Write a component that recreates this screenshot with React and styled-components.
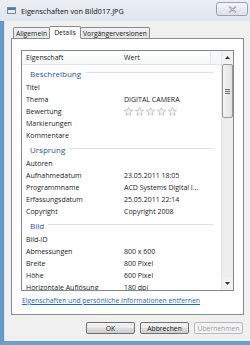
import React from "react";
import styled, { createGlobalStyle } from "styled-components";

const GlobalStyle = createGlobalStyle`
  html, body {
    margin: 0;
    padding: 0;
  }
  body {
    width: 250px;
    height: 345px;
    overflow: hidden;
    font-family: "Open Sans", "Noto Sans", sans-serif;
    color: #1a1a1a;
  }
`;

export const Window = styled.div`
  width: 250px;
  height: 345px;
  display: flex;
  flex-direction: column;
  overflow: hidden;
  background: #e3e9f0;
`;

export const TitleBar = styled.div`
  height: 21px;
  flex: none;
  display: flex;
  align-items: center;
  padding-left: 7px;
  background: linear-gradient(#e9eef4, #dfe6ee);
`;

export const TitleText = styled.span`
  font-size: 7.3px;
  margin-left: 5px;
  color: #111;
  flex: 1;
  white-space: nowrap;
`;

export const CloseButton = styled.div`
  width: 30px;
  height: 12px;
  margin-right: 2px;
  margin-top: -3px;
  border: 1px solid #9aa3ae;
  border-radius: 3px;
  background: linear-gradient(#f3f5f8, #dde3ea);
  display: flex;
  align-items: center;
  justify-content: center;
`;

export const Frame = styled.div`
  flex: 1;
  display: flex;
  border-left: 4px solid #6599cb;
  border-bottom: 4px solid #719fcc;
`;

export const Body = styled.div`
  flex: 1;
  display: flex;
  flex-direction: column;
  background: #f0f0f0;
  border-left: 1px solid #dfe3e8;
  padding: 4px 6px 0 6px;
`;

export const TabRow = styled.div`
  height: 13px;
  display: flex;
  align-items: flex-end;
  padding-left: 2px;
  position: relative;
  z-index: 1;
`;

export const Tab = styled.div`
  height: ${(p) => (p.$active ? "13px" : "11px")};
  width: ${(p) => p.$w}px;
  box-sizing: border-box;
  margin-right: -1px;
  border: 1px solid #898c95;
  border-bottom: ${(p) => (p.$active ? "1px solid #fff" : "none")};
  margin-bottom: ${(p) => (p.$active ? "-1px" : "0")};
  background: ${(p) => (p.$active ? "#fff" : "linear-gradient(#f2f2f2, #e3e3e3)")};
  font-size: 6.8px;
  white-space: nowrap;
  display: flex;
  align-items: center;
  justify-content: center;
  border-radius: 2px 2px 0 0;
`;

export const Panel = styled.div`
  height: 277px;
  box-sizing: border-box;
  border: 1px solid #898c95;
  background: #fff;
  padding: 11px 9px 0 9px;
  display: flex;
  flex-direction: column;
`;

export const ListBox = styled.div`
  height: 241px;
  flex: none;
  box-sizing: border-box;
  border: 1px solid #828790;
  display: flex;
  overflow: hidden;
`;

export const ListContent = styled.div`
  flex: 1;
  overflow: hidden;
  display: flex;
  flex-direction: column;
`;

export const HeaderRow = styled.div`
  height: 13px;
  flex: none;
  display: flex;
  align-items: center;
  border-bottom: 1px solid #e2e4e8;
  background: linear-gradient(#ffffff, #f7f8f9);
  font-size: 7px;
`;

export const HeaderCell = styled.div`
  width: ${(p) => p.$w}px;
  height: 100%;
  box-sizing: border-box;
  display: flex;
  align-items: center;
  padding-left: ${(p) => p.$pad}px;
  border-right: ${(p) => (p.$sep ? "1px solid #e3e5e8" : "none")};
  background: ${(p) => (p.$fill ? "#f6f7f8" : "transparent")};
`;

export const Section = styled.div`
  height: 16px;
  flex: none;
  display: flex;
  align-items: center;
  padding-left: 8px;
  padding-right: 8px;
  color: #2f4f9e;
  font-size: 8px;
  &::after {
    content: "";
    flex: 1;
    height: 1px;
    margin-left: 4px;
    margin-top: -1px;
    background: #dce3ec;
  }
`;

export const Row = styled.div`
  height: 12px;
  flex: none;
  display: flex;
  align-items: center;
  font-size: 7px;
  white-space: nowrap;
`;

export const NameCell = styled.div`
  width: 102px;
  padding-left: 4px;
  box-sizing: border-box;
`;

export const ValueCell = styled.div`
  display: flex;
  gap: 2px;
`;

export const ScrollBar = styled.div`
  width: 11px;
  flex: none;
  display: flex;
  flex-direction: column;
  background: #eeeeee;
  border-left: 1px solid #e6e6e6;
`;

export const ArrowButton = styled.div`
  height: 13px;
  flex: none;
  display: flex;
  align-items: center;
  justify-content: center;
  background: #f2f2f2;
`;

export const Thumb = styled.div`
  height: 54px;
  flex: none;
  box-sizing: border-box;
  border: 1px solid #9a9a9a;
  border-radius: 2px;
  background: linear-gradient(90deg, #f4f4f4, #e2e2e2);
  display: flex;
  flex-direction: column;
  align-items: center;
  justify-content: center;
  gap: 1px;
`;

export const Grip = styled.div`
  width: 5px;
  height: 1px;
  background: #707070;
`;

export const Track = styled.div`
  flex: 1;
`;

export const Link = styled.a`
  margin-top: 5px;
  font-size: 6.8px;
  color: #1a66c4;
  text-decoration: underline;
  white-space: nowrap;
  padding-left: 1px;
`;

export const ButtonRow = styled.div`
  display: flex;
  justify-content: flex-end;
  gap: 5px;
  margin-top: 7px;
  padding-right: 1px;
`;

export const Button = styled.div`
  width: 49px;
  height: 12px;
  box-sizing: border-box;
  border: 1px solid ${(p) => (p.$disabled ? "#b6babe" : "#707070")};
  border-radius: 2px;
  background: ${(p) =>
    p.$disabled ? "#f4f4f4" : "linear-gradient(#f2f2f2 0%, #ebebeb 50%, #dddddd 51%, #cfcfcf 100%)"};
  color: ${(p) => (p.$disabled ? "#a0a0a0" : "#1a1a1a")};
  font-size: 6.8px;
  white-space: nowrap;
  display: flex;
  align-items: center;
  justify-content: center;
`;

const Star = () => (
  <svg width="9" height="9" viewBox="0 0 10 10">
    <path
      d="M5 0.6 L6.3 3.5 L9.5 3.8 L7.1 5.9 L7.8 9.2 L5 7.5 L2.2 9.2 L2.9 5.9 L0.5 3.8 L3.7 3.5 Z"
      fill="#f7f7f7"
      stroke="#b3b3b3"
      strokeWidth="0.8"
      strokeLinejoin="round"
    />
  </svg>
);

const WindowIcon = () => (
  <svg width="9" height="7" viewBox="0 0 9 7">
    <rect x="0.5" y="0.5" width="8" height="6" fill="#e8eef4" stroke="#7d8a98" />
    <rect x="1" y="1" width="7" height="2" fill="#3f7fb5" />
  </svg>
);

const CloseIcon = () => (
  <svg width="9" height="7" viewBox="0 0 9 7">
    <path d="M1 0.5 L8 6.5 M8 0.5 L1 6.5" stroke="#8a9099" strokeWidth="1.6" />
    <path d="M1 0.5 L8 6.5 M8 0.5 L1 6.5" stroke="#f4f6f8" strokeWidth="0.5" />
  </svg>
);

// only rows that are (partly) visible in the list box
const sections = [
  {
    title: "Beschreibung",
    rows: [
      ["Titel", ""],
      ["Thema", "DIGITAL CAMERA"],
      ["Bewertung", "stars"],
      ["Markierungen", ""],
      ["Kommentare", ""],
    ],
  },
  {
    title: "Ursprung",
    rows: [
      ["Autoren", ""],
      ["Aufnahmedatum", "23.05.2011 18:05"],
      ["Programmname", "ACD Systems Digital I..."],
      ["Erfassungsdatum", "25.05.2011 22:14"],
      ["Copyright", "Copyright 2008"],
    ],
  },
  {
    title: "Bild",
    rows: [
      ["Bild-ID", ""],
      ["Abmessungen", "800 x 600"],
      ["Breite", "800 Pixel"],
      ["Höhe", "600 Pixel"],
      ["Horizontale Auflösung", "180 dpi"],
    ],
  },
];

const App = () => {
  return (
    <>
      <GlobalStyle />
      <Window>
        <TitleBar>
          <WindowIcon />
          <TitleText>Eigenschaften von Bild017.JPG</TitleText>
          <CloseButton>
            <CloseIcon />
          </CloseButton>
        </TitleBar>
        <Frame>
          <Body>
            <TabRow>
              <Tab $w={37}>Allgemein</Tab>
              <Tab $w={32} $active>Details</Tab>
              <Tab $w={70}>Vorgängerversionen</Tab>
            </TabRow>
            <Panel>
              <ListBox>
                <ListContent>
                  <HeaderRow>
                    <HeaderCell $w={102} $pad={4}>Eigenschaft</HeaderCell>
                    <HeaderCell $w={87} $pad={0} $sep>Wert</HeaderCell>
                    <HeaderCell $w={10} $pad={0} $fill />
                  </HeaderRow>
                  {sections.map((s) => (
                    <React.Fragment key={s.title}>
                      <Section>{s.title}</Section>
                      {s.rows.map(([name, value]) => (
                        <Row key={name}>
                          <NameCell>{name}</NameCell>
                          <ValueCell>
                            {value === "stars"
                              ? [0, 1, 2, 3, 4].map((i) => <Star key={i} />)
                              : value}
                          </ValueCell>
                        </Row>
                      ))}
                    </React.Fragment>
                  ))}
                </ListContent>
                <ScrollBar>
                  <ArrowButton>
                    <svg width="5" height="3" viewBox="0 0 5 3">
                      <path d="M0 3 L2.5 0 L5 3 Z" fill="#333" />
                    </svg>
                  </ArrowButton>
                  <Thumb>
                    <Grip />
                    <Grip />
                    <Grip />
                  </Thumb>
                  <Track />
                  <ArrowButton>
                    <svg width="5" height="3" viewBox="0 0 5 3">
                      <path d="M0 0 L2.5 3 L5 0 Z" fill="#333" />
                    </svg>
                  </ArrowButton>
                </ScrollBar>
              </ListBox>
              <Link>Eigenschaften und persönliche Informationen entfernen</Link>
            </Panel>
            <ButtonRow>
              <Button>OK</Button>
              <Button>Abbrechen</Button>
              <Button $disabled>Übernehmen</Button>
            </ButtonRow>
          </Body>
        </Frame>
      </Window>
    </>
  );
};

export default App;
